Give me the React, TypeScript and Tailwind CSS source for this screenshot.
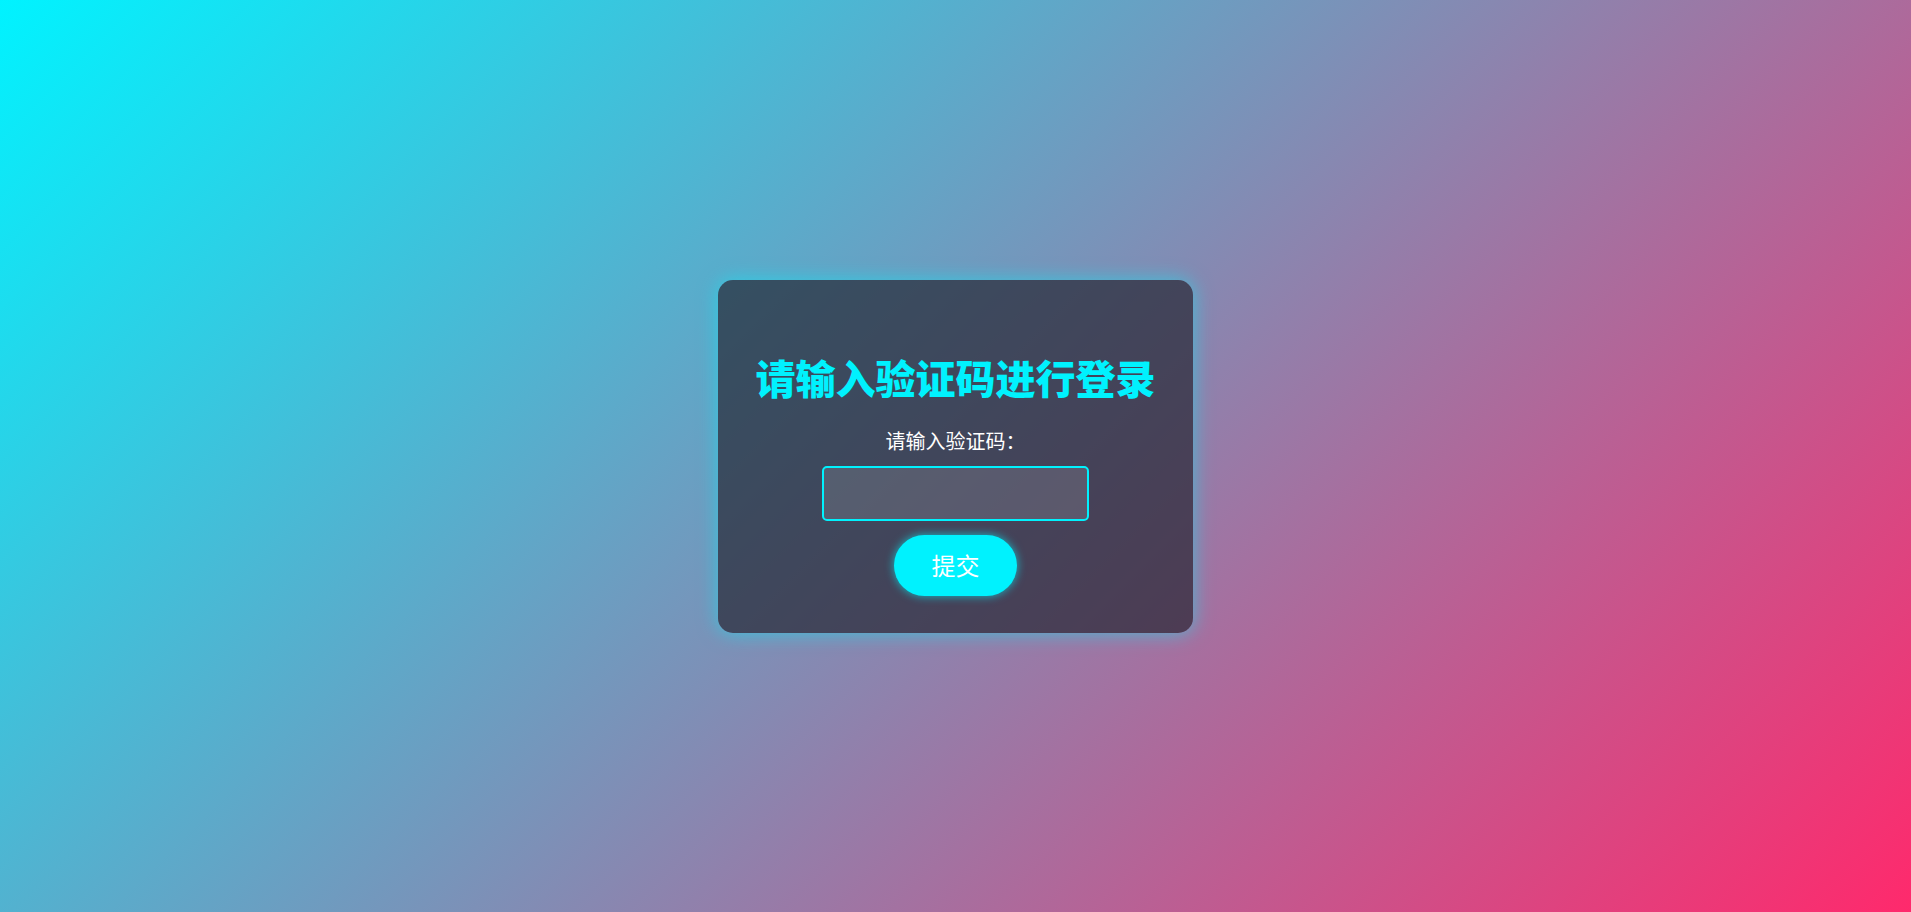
export default function App() {
  return (
    <div
      className="flex h-[912px] w-full items-center justify-center bg-[linear-gradient(135deg,#00f3ff_0%,#ff296c_100%)]"
      style={{ fontFamily: '"Noto Sans CJK SC", "Noto Sans", sans-serif' }}
    >
      {/* Login card */}
      <div className="flex w-[475px] h-[353px] flex-col items-center rounded-[15px] bg-[rgba(34,34,46,0.67)] px-[36px] pt-[73px] shadow-[0_0_20px_rgba(0,242,254,0.55)]">
        <h2 className="whitespace-nowrap text-[40px] font-black leading-[48px] text-[#00f2fe]">请输入验证码进行登录</h2>
        <label className="mt-[26px] text-[20px] leading-[28px] text-white">请输入验证码：</label>
        <input
          type="text"
          className="mt-[11px] h-[55px] w-[267px] rounded-[5px] border-2 border-[#00f2fe] bg-[rgba(255,255,255,0.12)] px-3 text-white outline-none"
        />
        <button className="mt-[14px] h-[61px] w-[123px] rounded-full bg-[#00f2fe] text-[24px] text-white shadow-[0_0_10px_rgba(0,242,254,0.7)]">
          提交
        </button>
      </div>
    </div>
  )
}
